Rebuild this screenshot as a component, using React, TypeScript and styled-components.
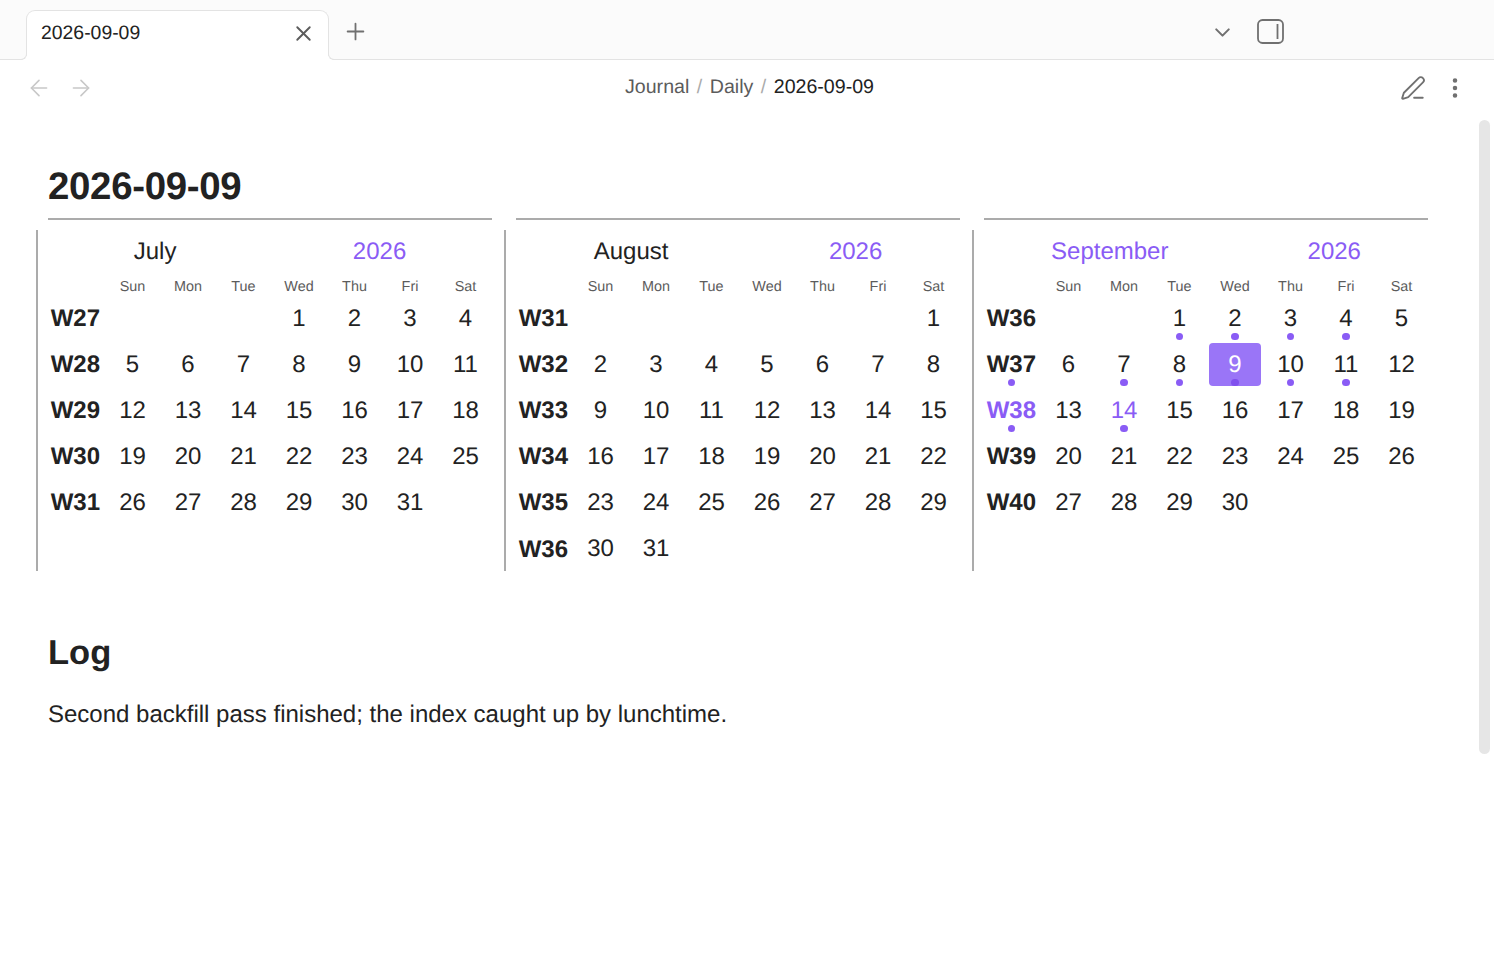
import styled, { createGlobalStyle } from "styled-components";
import { ArrowLeft, ArrowRight, ChevronDown, EllipsisVertical, PenLine, Plus, X } from "lucide-react";

const GlobalStyle = createGlobalStyle`
  html, body {
    margin: 0;
    height: 100%;
    overflow: hidden;
    background: #fff;
    color: #222;
    font-family: "Liberation Sans", Arial, sans-serif;
    text-rendering: geometricPrecision;
  }
`;

const ACCENT = "#8a5cf5";
const WEEKDAYS = ["Sun", "Mon", "Tue", "Wed", "Thu", "Fri", "Sat"];

type Month = {
  name: string;
  firstWeek: number;
  offset: number;
  days: number;
  current?: boolean;
};

const MONTHS: Month[] = [
  { name: "July", firstWeek: 27, offset: 3, days: 31 },
  { name: "August", firstWeek: 31, offset: 6, days: 31 },
  { name: "September", firstWeek: 36, offset: 2, days: 30, current: true },
];

// only September has notes in this vault
const DOT_DAYS = [1, 2, 3, 4, 7, 8, 9, 10, 11, 14];
const DOT_WEEKS = [37, 38];

function buildWeeks(month: Month) {
  const weeks: (number | null)[][] = [];
  let row: (number | null)[] = Array(month.offset).fill(null);
  for (let d = 1; d <= month.days; d++) {
    row.push(d);
    if (row.length === 7) {
      weeks.push(row);
      row = [];
    }
  }
  if (row.length) {
    while (row.length < 7) row.push(null);
    weeks.push(row);
  }
  return weeks;
}

function SidebarIcon() {
  return (
    <svg width="27" height="25" viewBox="0 0 27 25" fill="none" stroke="#707070" strokeWidth="1.8">
      <rect x="1" y="1" width="25" height="23" rx="4.5" />
      <path d="M20.5 5v15" />
    </svg>
  );
}

export default function App() {
  return (
    <Page>
      <GlobalStyle />
      <TabBar>
        <Tab>
          <TabTitle>2026-09-09</TabTitle>
          <TabClose>
            <X size={25} strokeWidth={1.8} />
          </TabClose>
        </Tab>
        <NewTab>
          <Plus size={27} strokeWidth={1.6} />
        </NewTab>
        <TabActions>
          <Chevron size={25} strokeWidth={2} />
          <SidebarIcon />
        </TabActions>
      </TabBar>

      <NavBar>
        <NavButtons>
          <ArrowLeft size={26} strokeWidth={1.5} />
          <ArrowRight size={26} strokeWidth={1.5} />
        </NavButtons>
        <Breadcrumb>
          <span>Journal</span>
          <Slash>/</Slash>
          <span>Daily</span>
          <Slash>/</Slash>
          <Current>2026-09-09</Current>
        </Breadcrumb>
        <NavActions>
          <PenLine size={26} strokeWidth={1.7} />
          <EllipsisVertical size={26} strokeWidth={2.2} />
        </NavActions>
      </NavBar>

      <Content>
        <Title>2026-09-09</Title>
        <Calendars>
          {MONTHS.map((month) => (
            <Column key={month.name}>
              <Rule />
              <Calendar>
                <CalendarHead>
                  <HeadLabel $accent={month.current}>{month.name}</HeadLabel>
                  <HeadLabel $accent>2026</HeadLabel>
                </CalendarHead>
                <DayGrid>
                  <span />
                  {WEEKDAYS.map((w) => (
                    <Weekday key={w}>{w}</Weekday>
                  ))}
                  {buildWeeks(month).map((week, i) => {
                    const weekNo = month.firstWeek + i;
                    const marked = month.current && DOT_WEEKS.includes(weekNo);
                    return [
                      <WeekCell key={`w${weekNo}`} $accent={month.current && weekNo === 38}>
                        W{weekNo}
                        {marked && <Dot $week />}
                      </WeekCell>,
                      ...week.map((day, j) => (
                        <DayCell
                          key={`${weekNo}-${j}`}
                          $selected={month.current && day === 9}
                          $accent={month.current && day === 14}
                        >
                          {day}
                          {month.current && day !== null && DOT_DAYS.includes(day) && (
                            <Dot $dark={day === 9} />
                          )}
                        </DayCell>
                      )),
                    ];
                  })}
                </DayGrid>
              </Calendar>
            </Column>
          ))}
        </Calendars>
        <SectionTitle>Log</SectionTitle>
        <Paragraph>Second backfill pass finished; the index caught up by lunchtime.</Paragraph>
      </Content>

      <ScrollThumb />
    </Page>
  );
}

const Page = styled.div`
  position: relative;
  height: 960px;
  overflow: hidden;
`;

const TabBar = styled.header`
  display: flex;
  align-items: flex-end;
  height: 60px;
  box-sizing: border-box;
  padding-left: 26px;
  background: #fbfbfb;
  border-bottom: 1px solid #e3e3e3;
`;

const Tab = styled.div`
  position: relative;
  display: flex;
  justify-content: space-between;
  width: 303px;
  height: 50px;
  box-sizing: border-box;
  margin-bottom: -1px;
  padding: 11px 12.5px 0 14px;
  background: #fff;
  border: 1px solid #e3e3e3;
  border-bottom: none;
  border-radius: 9px 9px 0 0;

  &::before,
  &::after {
    content: "";
    position: absolute;
    bottom: 0;
    width: 6px;
    height: 6px;
    background: #fbfbfb;
    border-bottom: 1px solid #e3e3e3;
  }
  &::before {
    left: -7px;
    border-right: 1px solid #e3e3e3;
    border-bottom-right-radius: 6px;
    box-shadow: 3px 3px 0 #fff;
  }
  &::after {
    right: -7px;
    border-left: 1px solid #e3e3e3;
    border-bottom-left-radius: 6px;
    box-shadow: -3px 3px 0 #fff;
  }
`;

const TabTitle = styled.span`
  font-size: 19.4px;
  line-height: 23px;
  color: #222;
`;

const TabClose = styled.span`
  display: flex;
  margin-top: -1px;
  height: 25px;
  color: #5c5c5c;
`;

const NewTab = styled.div`
  display: flex;
  align-self: flex-start;
  margin: 18px 0 0 13px;
  color: #707070;
`;

const TabActions = styled.div`
  display: flex;
  align-items: center;
  align-self: flex-start;
  gap: 22px;
  margin: 18px 0 0 841px;
`;

const Chevron = styled(ChevronDown)`
  margin-top: 2px;
  color: #707070;
`;

const NavBar = styled.nav`
  display: grid;
  grid-template-columns: 1fr auto 1fr;
  align-items: center;
  height: 56px;
  padding: 0 26px 0 26px;
`;

const NavButtons = styled.div`
  display: flex;
  gap: 16px;
  color: #c8c8c8;
`;

const Breadcrumb = styled.div`
  display: flex;
  gap: 7.5px;
  margin: -2px 0 0 5px;
  font-size: 19.6px;
  line-height: 24px;
  color: #5c5c5c;
`;

const Slash = styled.span`
  color: #ababab;
`;

const Current = styled.span`
  color: #222;
`;

const NavActions = styled.div`
  display: flex;
  align-items: center;
  justify-content: flex-end;
  gap: 16px;
  color: #707070;
`;

const Content = styled.main`
  padding: 45px 0 0 48px;
`;

const Title = styled.h1`
  margin: 0 0 5px;
  font-size: 38.4px;
  line-height: 52px;
  font-weight: 700;
  letter-spacing: -0.3px;
`;

const Calendars = styled.section`
  display: grid;
  grid-template-columns: repeat(3, 444px);
  gap: 24px;
`;

const Column = styled.div`
  display: flex;
  flex-direction: column;
`;

const Rule = styled.div`
  height: 2px;
  margin-bottom: 10px;
  background: #ababab;
`;

const Calendar = styled.div`
  height: 341px;
  margin-left: -12px;
  padding-left: 8px;
  border-left: 2px solid #ababab;
`;

const CalendarHead = styled.div`
  display: flex;
  justify-content: space-around;
  align-items: center;
  box-sizing: border-box;
  width: 449px;
  height: 42px;
  margin-left: -0.5px;
  padding-top: 2px;
`;

const HeadLabel = styled.span<{ $accent?: boolean }>`
  font-size: 24px;
  line-height: 40px;
  color: ${(p) => (p.$accent ? ACCENT : "#222")};
`;

const DayGrid = styled.div`
  display: grid;
  grid-template-columns: 58.75px repeat(7, 55.5px);
  grid-template-rows: 23px;
  grid-auto-rows: 46.12px;
`;

const Weekday = styled.div`
  padding-top: 7px;
  font-size: 14.4px;
  line-height: 17px;
  text-align: center;
  color: #5c5c5c;
`;

const WeekCell = styled.div<{ $accent?: boolean }>`
  position: relative;
  font-size: 24px;
  font-weight: 700;
  line-height: 48px;
  text-align: center;
  color: ${(p) => (p.$accent ? ACCENT : "#222")};
`;

const DayCell = styled.div<{ $selected?: boolean; $accent?: boolean }>`
  position: relative;
  display: flex;
  align-items: center;
  justify-content: center;
  height: 43px;
  margin: 2px 1.75px 1.12px;
  border-radius: 4px;
  font-size: 24px;
  color: ${(p) => (p.$selected ? "#fff" : p.$accent ? ACCENT : "#222")};
  background: ${(p) => (p.$selected ? "#9a75f7" : "transparent")};
`;

const Dot = styled.i<{ $week?: boolean; $dark?: boolean }>`
  position: absolute;
  left: 50%;
  bottom: ${(p) => (p.$week ? "1px" : "0px")};
  width: 7.5px;
  height: 7.5px;
  margin-left: -3.75px;
  border-radius: 50%;
  background: ${(p) => (p.$dark ? "#8050ee" : ACCENT)};
`;

const SectionTitle = styled.h2`
  margin: 60px 0 0;
  font-size: 34.5px;
  line-height: 44px;
  font-weight: 700;
`;

const Paragraph = styled.p`
  margin: 22px 0 0;
  font-size: 24px;
  line-height: 36px;
`;

const ScrollThumb = styled.div`
  position: absolute;
  top: 120px;
  right: 4px;
  width: 11px;
  height: 634px;
  border-radius: 6px;
  background: #e6e6e6;
`;
